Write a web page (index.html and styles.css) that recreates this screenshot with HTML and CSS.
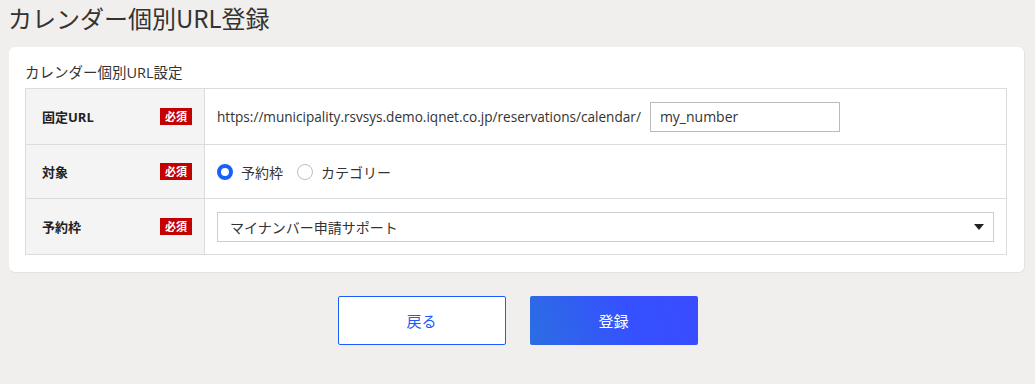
FILE: index.html
```html
<!DOCTYPE html>
<html lang="ja">
<head>
<meta charset="utf-8">
<title>カレンダー個別URL登録</title>
<link rel="stylesheet" href="styles.css">
</head>
<body>
<h1 class="page-title">カレンダー個別URL登録</h1>
<section class="card">
  <h2 class="card-title">カレンダー個別URL設定</h2>
  <div class="form-table">
    <div class="row row-url">
      <div class="label"><span>固定URL</span><span class="badge">必須</span></div>
      <div class="value">
        <span class="url-text">https://municipality.rsvsys.demo.iqnet.co.jp/reservations/calendar/</span>
        <div class="text-input">my_number</div>
      </div>
    </div>
    <div class="row row-target">
      <div class="label"><span>対象</span><span class="badge">必須</span></div>
      <div class="value">
        <span class="radio checked"></span><span class="radio-label">予約枠</span>
        <span class="radio"></span><span class="radio-label">カテゴリー</span>
      </div>
    </div>
    <div class="row row-slot">
      <div class="label"><span>予約枠</span><span class="badge">必須</span></div>
      <div class="value">
        <div class="select"><span>マイナンバー申請サポート</span><span class="arrow"></span></div>
      </div>
    </div>
  </div>
</section>
<div class="actions">
  <button class="btn btn-back">戻る</button>
  <button class="btn btn-submit">登録</button>
</div>
</body>
</html>
```

FILE: styles.css
```css
html, body {
  margin: 0;
  padding: 0;
}
body {
  background: #f0efed;
  font-family: "Open Sans", "Noto Sans CJK JP", sans-serif;
  color: #333;
  width: 1035px;
  height: 384px;
  overflow: hidden;
}
.page-title {
  margin: 0;
  padding: 3px 0 0 8px;
  height: 47px;
  box-sizing: border-box;
  font-family: "Noto Sans CJK JP", sans-serif;
  font-size: 24px;
  font-weight: normal;
  line-height: 30px;
  color: #333;
}
.card {
  margin: 0 10px 0 9px;
  background: #fff;
  border-radius: 6px;
  padding: 16px 17px 17px 16px;
  border-right: 1px solid #e2e2e0;
  border-bottom: 1px solid #e2e2e0;
}
.card-title {
  margin: 0 0 5px 0;
  font-size: 14.5px;
  font-weight: normal;
  line-height: 20px;
  color: #333;
}
.form-table {
  border: 1px solid #dcdcdc;
  border-bottom: none;
}
.row {
  display: flex;
  border-bottom: 1px solid #dcdcdc;
}
.row-url { height: 55px; }
.row-target { height: 53px; }
.row-slot { height: 55px; }
.label {
  width: 179px;
  flex: none;
  background: #f4f4f4;
  border-right: 1px solid #dcdcdc;
  display: flex;
  align-items: center;
  justify-content: space-between;
  padding: 0 12px 0 16px;
  box-sizing: border-box;
  font-size: 13px;
  font-weight: bold;
  color: #222;
}
.badge {
  display: inline-block;
  width: 32px;
  height: 17px;
  line-height: 17px;
  background: #c40000;
  color: #fff;
  font-size: 11px;
  font-weight: bold;
  text-align: center;
}
.value {
  flex: 1;
  display: flex;
  align-items: center;
  padding: 0 12px;
  font-size: 14px;
  color: #333;
}
.url-text {
  white-space: nowrap;
  font-size: 13.6px;
}
.text-input {
  margin-left: 9px;
  width: 190px;
  height: 30px;
  box-sizing: border-box;
  border: 1px solid #bbb;
  padding-left: 9px;
  line-height: 28px;
  font-size: 14px;
  color: #333;
}
.radio {
  width: 16px;
  height: 16px;
  box-sizing: border-box;
  border-radius: 50%;
  border: 1px solid #bdbdbd;
  background: #fff;
  flex: none;
}
.radio.checked {
  border: 4px solid #1662f8;
}
.radio-label {
  margin: 0 14px 0 8px;
}
.select {
  flex: 1;
  height: 30px;
  box-sizing: border-box;
  border: 1px solid #c8d0d6;
  display: flex;
  align-items: center;
  justify-content: space-between;
  padding: 0 9px 0 12px;
  font-size: 14px;
}
.arrow {
  width: 0;
  height: 0;
  border-left: 5px solid transparent;
  border-right: 5px solid transparent;
  border-top: 6px solid #222;
}
.actions {
  display: flex;
  justify-content: center;
  gap: 24px;
  margin-top: 23px;
}
.btn {
  width: 168px;
  height: 49px;
  border-radius: 2px;
  font-family: "Open Sans", "Noto Sans CJK JP", sans-serif;
  font-size: 15px;
  cursor: pointer;
}
.btn-back {
  background: #fff;
  border: 1px solid #1a5cff;
  color: #1a5cff;
}
.btn-submit {
  background: linear-gradient(70deg, #2c6ee2, #3550ff 60%, #3a4cff);
  border: none;
  color: #fff;
}
```
